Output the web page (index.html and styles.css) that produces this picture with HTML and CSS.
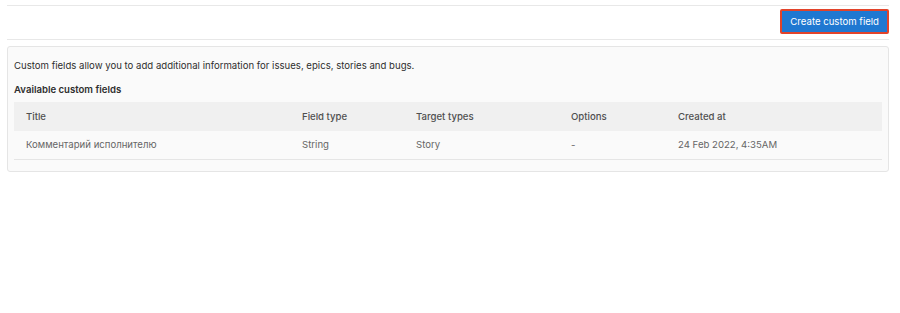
FILE: index.html
```html
<!DOCTYPE html>
<html lang="en">
<head>
  <meta charset="UTF-8">
  <meta name="viewport" content="width=device-width, initial-scale=1.0">
  <title>Custom fields</title>
  <link rel="stylesheet" href="styles.css">
</head>
<body>
  <div class="page">
    <div class="top-bar">
      <button class="btn btn-create">Create custom field</button>
    </div>

    <div class="card">
      <p class="intro">Custom fields allow you to add additional information for issues, epics, stories and bugs.</p>
      <h4>Available custom fields</h4>

      <table class="fields-table">
        <colgroup>
          <col class="col-title">
          <col class="col-type">
          <col class="col-target">
          <col class="col-options">
          <col class="col-created">
        </colgroup>
        <thead>
          <tr>
            <th>Title</th>
            <th>Field type</th>
            <th>Target types</th>
            <th>Options</th>
            <th>Created at</th>
          </tr>
        </thead>
        <tbody>
          <tr>
            <td>Комментарий исполнителю</td>
            <td>String</td>
            <td>Story</td>
            <td>-</td>
            <td>24 Feb 2022, 4:35AM</td>
          </tr>
        </tbody>
      </table>
    </div>
  </div>
</body>
</html>
```

FILE: styles.css
```css
body {
  margin: 0;
  font-family: Inter, "Liberation Sans", Arial, sans-serif;
  font-size: 9.6px;
  color: #2e2e2e;
  background: #fff;
}

.page {
  margin: 0 11px 0 7px;
  padding-top: 5px;
}

.top-bar {
  display: flex;
  justify-content: flex-end;
  align-items: flex-start;
  border-top: 1px solid #e8e8e8;
  border-bottom: 1px solid #e8e8e8;
  padding: 3px 0 5px;
}

.btn {
  font-family: inherit;
  font-size: 9.6px;
  cursor: pointer;
}

.btn-create {
  height: 25px;
  padding: 0 8px;
  background: #1f78d1;
  color: #fff;
  border: 2px solid #e2432a;
  border-radius: 2px;
}

.card {
  margin-top: 6px;
  background: #fafafa;
  border: 1px solid #e5e5e5;
  border-radius: 3px;
  padding: 12px 6px 11px;
}

.intro {
  margin: 0 0 10px;
  line-height: 14px;
  color: #2e2e2e;
}

.card h4 {
  margin: 0 0 5px;
  font-size: 9.6px;
  line-height: 14px;
  font-weight: 600;
  color: #2e2e2e;
}

.fields-table {
  width: 100%;
  border-collapse: collapse;
  table-layout: fixed;
}

.col-title { width: 276px; }
.col-type { width: 114px; }
.col-target { width: 155px; }
.col-options { width: 107px; }

.fields-table th,
.fields-table td {
  text-align: left;
  padding: 0 12px;
  line-height: 14px;
}

.fields-table th {
  background: #f0f0f0;
  height: 29px;
  font-weight: 500;
  color: #4f4f4f;
}

.fields-table td {
  height: 28px;
  color: #666;
  border-bottom: 1px solid #e5e5e5;
}
```
